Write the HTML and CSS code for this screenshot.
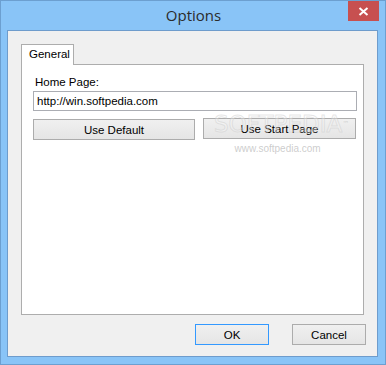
FILE: index.html
```html
<!DOCTYPE html>
<html lang="en">
<head>
    <meta charset="UTF-8">
    <title>Options</title>
    <link rel="stylesheet" href="styles.css">
</head>
<body>

<div class="window">
    <div class="titlebar">
        <div class="title">Options</div>
        <div class="close-btn">
            <svg width="11" height="9" viewBox="0 0 11 9">
                <path d="M1.5 1 L9.5 8 M9.5 1 L1.5 8" stroke="#fff" stroke-width="2"/>
            </svg>
        </div>
    </div>

    <div class="client">
        <div class="tabs">
            <div class="tab active">General</div>
        </div>
        <div class="tab-panel">
            <div class="label">Home Page:</div>
            <input type="text" class="text-input" value="http://win.softpedia.com">
            <div class="btn-row">
                <button class="btn btn-wide">Use Default</button>
                <button class="btn btn-start">Use Start Page</button>
            </div>
            <div class="watermark">
                <div class="wm-big">SOFTPEDIA<span class="wm-tm">™</span></div>
                <div class="wm-small">www.softpedia.com</div>
            </div>
        </div>
        <div class="footer">
            <button class="btn btn-dialog btn-default">OK</button>
            <button class="btn btn-dialog">Cancel</button>
        </div>
    </div>
</div>

</body>
</html>
```

FILE: styles.css
```css
* {
    box-sizing: border-box;
    margin: 0;
    padding: 0;
}

body {
    background: #ffffff;
    font-family: "Liberation Sans", Arial, sans-serif;
    font-size: 11.5px;
    color: #000;
}

.window {
    width: 386px;
    height: 365px;
    background: #89c4f7;
    border: 1px solid #6c9fd0;
    padding: 0 7px 7px 6px;
    display: flex;
    flex-direction: column;
}

.titlebar {
    height: 29px;
    position: relative;
    display: flex;
    justify-content: center;
}

.title {
    font-family: "Open Sans", "Noto Sans", sans-serif;
    font-size: 15px;
    color: #2b2b2b;
    line-height: 29px;
    padding-left: 2px;
}

.close-btn {
    position: absolute;
    top: 0;
    right: -1px;
    width: 31px;
    height: 20px;
    background: #c75050;
    display: flex;
    align-items: center;
    justify-content: center;
}

.client {
    flex: 1;
    background: #f0f0f0;
    border: 1px solid #6e9ccc;
    padding: 13px 13px 0 13px;
    display: flex;
    flex-direction: column;
}

.tabs {
    display: flex;
    height: 20px;
}

.tab {
    width: 53px;
    height: 21px;
    background: #ffffff;
    border: 1px solid #adadad;
    border-bottom: none;
    padding: 3px 0 0 7px;
    position: relative;
    z-index: 1;
}

.tab-panel {
    position: relative;
    height: 251px;
    background: #ffffff;
    border: 1px solid #adadad;
    padding: 9px 6px 0 11px;
}

.label {
    height: 17px;
    line-height: 17px;
    padding-left: 2px;
}

.text-input {
    display: block;
    width: 324px;
    height: 20px;
    border: 1px solid #abadb3;
    font-family: inherit;
    font-size: 11.5px;
    padding: 0 3px;
    color: #000;
    outline: none;
}

.btn-row {
    display: flex;
    gap: 8px;
    margin-top: 7px;
}

.btn {
    font-family: inherit;
    font-size: 11.5px;
    color: #000;
    height: 21px;
    border: 1px solid #acacac;
    background: linear-gradient(#f0f0f0, #e5e5e5);
}

.btn-wide {
    width: 162px;
    margin-top: 1px;
}

.btn-start {
    width: 153px;
}

.watermark {
    position: absolute;
    left: 192px;
    top: 46px;
    text-align: center;
    pointer-events: none;
}

.wm-big {
    font-family: "DejaVu Sans", sans-serif;
    font-size: 23px;
    color: rgba(255, 255, 255, 0.3);
    -webkit-text-stroke: 1px rgba(200, 200, 200, 0.45);
    line-height: 26px;
}

.wm-tm {
    font-size: 7px;
    vertical-align: top;
    -webkit-text-stroke: 0;
    color: rgba(180, 180, 180, 0.5);
}

.wm-small {
    font-size: 10px;
    color: rgba(170, 170, 170, 0.6);
    margin-top: 6px;
    margin-left: -8px;
}

.footer {
    display: flex;
    justify-content: flex-end;
    gap: 23px;
    padding-top: 9px;
    margin-right: -2px;
}

.btn-dialog {
    width: 74px;
}

.btn-default {
    border-color: #3399ff;
}
```
